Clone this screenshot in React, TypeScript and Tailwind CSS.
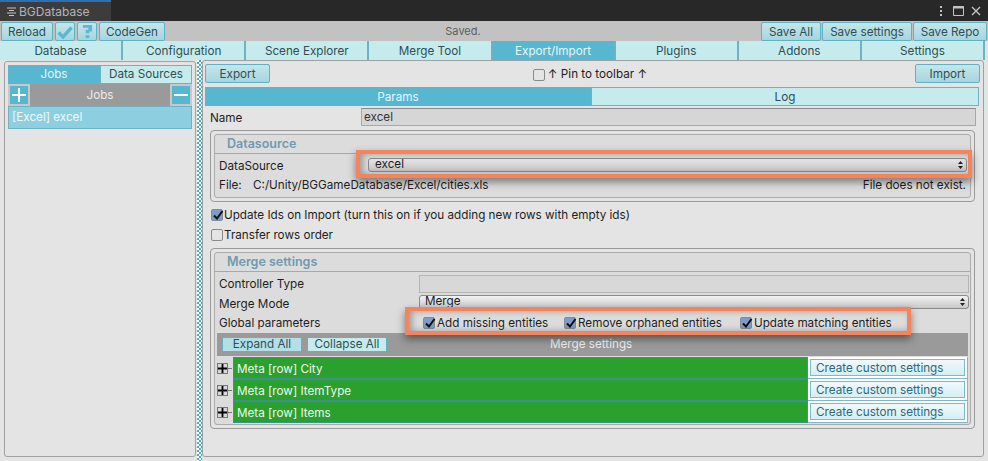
import React from "react";

const mainTabs = ["Database", "Configuration", "Scene Explorer", "Merge Tool", "Export/Import", "Plugins", "Addons", "Settings"];
const metas = ["Meta [row] City", "Meta [row] ItemType", "Meta [row] Items"];
const globals = [
  { label: "Add missing entities", w: "w-[141px]" },
  { label: "Remove orphaned entities", w: "w-[176px]" },
  { label: "Update matching entities", w: "w-[170px]" },
];

const btn =
  "h-[19px] pt-[2px] flex items-center justify-center border border-[#5fb2c4] rounded-[2px] bg-gradient-to-b from-[#c4e6ea] to-[#a6d5de] text-[#2f4f55]";

const Check = ({ on, blue }: { on?: boolean; blue?: boolean }) => (
  <span
    className={`relative w-[12px] h-[12px] shrink-0 rounded-[2px] border border-[#8a8a8a] ${
      blue ? "bg-[#7d9cc8]" : "bg-[#e4e4e4]"
    }`}
  >
    {on && (
      <svg viewBox="0 0 12 12" className="absolute left-[0px] top-[-1px] w-[12px] h-[12px]">
        <path d="M2 6.5 L5 9.5 L10.5 2" fill="none" stroke="#111" strokeWidth="2" />
      </svg>
    )}
  </span>
);

const Expander = () => (
  <span className="flex items-center">
    <span className="w-[11px] h-[11px] border border-[#777] bg-[#d8d8d8] flex items-center justify-center">
      <svg viewBox="0 0 9 9" className="w-[9px] h-[9px]">
        <path d="M0 4.5 H9 M4.5 0 V9" stroke="#000" strokeWidth="1.8" />
      </svg>
    </span>
    <span className="w-[4px] h-[1px] bg-[#777]" />
  </span>
);

const SelectArrows = () => (
  <svg viewBox="0 0 5 8" className="w-[5px] h-[8px]">
    <path d="M2.5 0 L5 3 H0 Z M2.5 8 L5 5 H0 Z" fill="#222" />
  </svg>
);

const GroupHeader = ({ title }: { title: string }) => (
  <div className="h-[19px] flex items-center pl-[12px] pt-[1px] border-b border-[#a8a8a8] text-[#6f9ab2] font-semibold text-[12.5px]">
    {title}
  </div>
);

const App = () => {
  return (
    <div
      className="relative w-[988px] h-[461px] overflow-hidden bg-[#e4e4e4] text-[11.7px] text-[#1e1e1e]"
      style={{ fontFamily: "Inter, 'Noto Sans', sans-serif" }}
    >
      {/* title bar */}
      <div className="h-[21px] bg-[#282828] flex justify-between">
        <div className="w-[111px] h-[21px] bg-[#3c3c3c] border-t-2 border-[#2f6fb0] flex items-center pl-[6px] gap-[2px] text-[#b4b4b4] text-[12px]">
          <svg viewBox="0 0 11 11" className="w-[11px] h-[11px]">
            <path d="M1 2 H10 M3 4.5 H8 M1 7 H10 M3 9.5 H8" stroke="#c4c4c4" strokeWidth="1" />
          </svg>
          BGDatabase
        </div>
        <div className="flex items-center gap-[7px] pr-[7px]">
          <svg viewBox="0 0 4 12" className="w-[4px] h-[12px] mr-[3px]">
            <path d="M1 1 H3 V3 H1 Z M1 5 H3 V7 H1 Z M1 9 H3 V11 H1 Z" fill="#c4c4c4" />
          </svg>
          <svg viewBox="0 0 11 10" className="w-[11px] h-[10px]">
            <path d="M.5 .5 H10.5 V9.5 H.5 Z" fill="none" stroke="#c4c4c4" />
            <path d="M0 1.5 H11" stroke="#c4c4c4" strokeWidth="2" />
          </svg>
          <svg viewBox="0 0 10 10" className="w-[10px] h-[10px]">
            <path d="M1 1 L9 9 M9 1 L1 9" stroke="#c4c4c4" strokeWidth="1.4" />
          </svg>
        </div>
      </div>

      {/* toolbar */}
      <div className="relative h-[20px] bg-[#c2c2c2] pt-[1px] pl-[1px] pr-[1px] flex gap-[1px]">
        <div className={`${btn} w-[52px]`}>Reload</div>
        <div className={`${btn} !pt-0 w-[20px] ml-[1px]`}>
          <svg viewBox="0 0 16 14" className="w-[16px] h-[14px]">
            <path d="M1.5 7.5 L6 12 L14.5 2.5" fill="none" stroke="#5cb8d2" strokeWidth="3.4" />
          </svg>
        </div>
        <div className={`${btn} !pt-0 w-[20px] ml-[1px]`}>
          <svg viewBox="0 0 12 16" className="w-[11px] h-[15px]">
            <path d="M1 1 H11 V8 H8 V10 H4 V6 H7 V4 H1 Z M4 12 H8 V15 H4 Z" fill="#5cb8d2" />
          </svg>
        </div>
        <div className={`${btn} w-[66px] ml-[1px]`}>CodeGen</div>
        <div className="flex-1 flex items-center justify-center text-[#5e5e5e] text-[11px]">Saved.</div>
        <div className={`${btn} w-[60px]`}>Save All</div>
        <div className={`${btn} w-[90px]`}>Save settings</div>
        <div className={`${btn} w-[74px]`}>Save Repo</div>
      </div>

      {/* main tabs */}
      <div className="h-[19px] bg-[#c2c2c2] flex w-[985px]">
        {mainTabs.map((t) => (
          <div
            key={t}
            className={`flex-1 pt-[2px] flex items-center justify-center border-r-2 border-[#6fb2c0] ${
              t === "Export/Import" ? "bg-[#57b6d0] text-[#e8f6fa]" : "bg-[#c5ebec] text-[#2f4f55]"
            }`}
          >
            {t}
          </div>
        ))}
      </div>

      <div className="flex h-[401px]">
        {/* left pane */}
        <div className="w-[197px] pl-[4px] pr-[1px] pt-[1px]">
          <div className="h-[396px] border border-[#a0a0a0] rounded-[3px] px-[3px] pt-[3px]">
            <div className="flex h-[19px]">
              <div className="w-[92px] pt-[1px] bg-[#57b6d0] text-[#e8f6fa] flex items-center justify-center">Jobs</div>
              <div className="w-[92px] pt-[1px] bg-[#c5ebec] border border-[#6fb2c0] text-[#2f4f55] flex items-center justify-center">
                Data Sources
              </div>
            </div>
            <div className="h-[22px] bg-[#9a9a9a] flex items-center w-[184px]">
              <div className="w-[22px] h-[22px] border-2 border-[#c8c8c8] bg-[#57b6d0] flex items-center justify-center">
                <svg viewBox="0 0 14 14" className="w-[14px] h-[14px]">
                  <path d="M0 7 H14 M7 0 V14" stroke="#fff" strokeWidth="2" />
                </svg>
              </div>
              <div className="flex-1 pt-[1px] text-center text-[#ececec]">Jobs</div>
              <div className="w-[22px] h-[22px] border-2 border-[#c8c8c8] bg-[#57b6d0] flex items-center justify-center">
                <svg viewBox="0 0 14 14" className="w-[14px] h-[14px]">
                  <path d="M0 7 H14" stroke="#fff" strokeWidth="2" />
                </svg>
              </div>
            </div>
            <div className="h-[23px] w-[184px] bg-[#8dcfe0] border border-[#6fb2c0] flex items-center pl-[3px] text-[#f2f8fa]">
              [Excel] excel
            </div>
          </div>
        </div>

        {/* splitter */}
        <div className="w-[5px] h-full bg-[repeating-conic-gradient(#3fb0c8_0%_25%,#ffffff_0%_50%)] bg-[length:4px_4px]" />

        {/* right pane */}
        <div className="w-[782px] h-[397px] border border-[#a0a0a0] rounded-[3px] px-[2px] pt-[3px]">
          <div className="flex h-[19px] justify-between items-center relative pr-[1px]">
            <div className={`${btn} w-[65px]`}>Export</div>
            <div className="flex items-center gap-[3px] pr-[5px] pt-[2px]">
              <Check />
              <span>↑ Pin to toolbar ↑</span>
            </div>
            <div className={`${btn} w-[65px]`}>Import</div>
          </div>

          <div className="flex mt-[4px] h-[19px] w-[774px]">
            <div className="flex-1 pt-[2px] bg-[#57b6d0] text-[#e8f6fa] flex items-center justify-center">Params</div>
            <div className="flex-1 pt-[2px] bg-[#c5ebec] border border-[#6fb2c0] text-[#2f4f55] flex items-center justify-center">
              Log
            </div>
          </div>

          <div className="flex items-center h-[18px] mt-[2px] pl-[5px]">
            <span className="w-[151px] pt-[4px]">Name</span>
            <div className="w-[615px] h-[18px] pt-[1px] border border-[#a8a8a8] border-t-[#8a8a8a] bg-[#d6d6d6] flex items-center pl-[2px] text-[#333]">
              excel
            </div>
          </div>

          {/* datasource group */}
          <div className="ml-[5px] w-[765px] h-[72px] mt-[4px] border border-[#9a9a9a] rounded-[4px] p-[3px]">
            <div className="h-[64px] border border-[#ababab] rounded-[3px] bg-[#dcdcdc]">
              <GroupHeader title="Datasource" />
              <div className="flex items-center h-[22px] pl-[4px]">
                <span className="w-[150px] pt-[4px]">DataSource</span>
                <div className="w-[599px] h-[14px] ml-[-1px] border border-[#8a8a8a] rounded-[3px] bg-gradient-to-b from-[#e6e6e6] to-[#c4c4c4] flex items-center justify-between pl-[6px] pr-[3px]">
                  <span>excel</span>
                  <SelectArrows />
                </div>
              </div>
              <div className="flex justify-between h-[16px] items-center pl-[4px] pr-[4px] pt-[4px]">
                <span>
                  <span className="inline-block w-[34px]">File:</span>C:/Unity/BGGameDatabase/Excel/cities.xls
                </span>
                <span>File does not exist.</span>
              </div>
            </div>
          </div>

          <div className="flex items-center gap-[1px] ml-[6px] mt-[5px] h-[15px]">
            <Check on blue />
            <span className="pt-[2px]">Update Ids on Import (turn this on if you adding new rows with empty ids)</span>
          </div>
          <div className="flex items-center gap-[1px] ml-[6px] mt-[5px] h-[15px]">
            <Check />
            <span className="pt-[2px]">Transfer rows order</span>
          </div>

          {/* merge group */}
          <div className="ml-[5px] w-[765px] h-[181px] mt-[6px] border border-[#9a9a9a] rounded-[4px] p-[3px]">
            <div className="h-[173px] border border-[#ababab] rounded-[3px] bg-[#dcdcdc]">
              <GroupHeader title="Merge settings" />
              <div className="flex items-center h-[19px] pl-[4px] mt-[2px]">
                <span className="w-[200px] pt-[2px]">Controller Type</span>
                <div className="w-[550px] h-[18px] border border-[#b4b4b4] bg-[#d8d8d8]" />
              </div>
              <div className="flex items-start h-[20px] pl-[4px] mt-[1px]">
                <span className="w-[200px] leading-[20px]">Merge Mode</span>
                <div className="w-[550px] h-[14px] mt-[1px] border border-[#8a8a8a] rounded-[3px] bg-gradient-to-b from-[#f2f2f2] to-[#c8c8c8] flex items-center justify-between pl-[5px] pr-[3px]">
                  <span>Merge</span>
                  <SelectArrows />
                </div>
              </div>
              <div className="flex items-center h-[19px] pl-[4px]">
                <span className="w-[204px]">Global parameters</span>
                {globals.map((g) => (
                  <div key={g.label} className={`flex items-center gap-[2px] ${g.w}`}>
                    <Check on blue />
                    <span>{g.label}</span>
                  </div>
                ))}
              </div>
              <div className="ml-[2px] w-[751px] h-[23px] bg-[#9a9a9a] flex items-center relative pl-[5px] gap-[5px]">
                <div className="w-[80px] h-[15px] border border-[#5fb2c4] bg-[#b4dfe6] text-[#2f4f55] flex items-center justify-center">
                  Expand All
                </div>
                <div className="w-[80px] h-[15px] border border-[#5fb2c4] bg-[#c5ebec] text-[#2f4f55] flex items-center justify-center">
                  Collapse All
                </div>
                <span className="ml-[158px] text-[#f0f0f0]">Merge settings</span>
              </div>
              <div className="mt-[1px]">
                {metas.map((m) => (
                  <div key={m} className="ml-[2px] w-[751px] h-[22px] flex items-center">
                    <div className="w-[16px] flex items-center">
                      <Expander />
                    </div>
                    <div className="w-[575px] h-[22px] bg-[#2aa02e] border border-[#3f9090] text-[#eef8ee] flex items-center pl-[3px] pt-[3px]">
                      {m}
                    </div>
                    <div className="w-[160px] h-[22px] bg-white border-b border-r border-[#7fb8c8] px-[2px] py-[2px]">
                      <div className="h-full pt-[3px] border border-[#7fb8c8] bg-gradient-to-b from-[#f0f9fb] to-[#d6eef4] text-[#2a6a7a] pl-[5px] flex items-center">
                        Create custom settings
                      </div>
                    </div>
                  </div>
                ))}
              </div>
            </div>
          </div>
        </div>
      </div>

      {/* orange callouts */}
      <div className="absolute left-[356px] top-[150px] w-[616px] h-[28px] border-4 border-[#f5845c] shadow-[0_4px_8px_rgba(0,0,0,0.45),inset_3px_0_6px_rgba(0,0,0,0.3)]" />
      <div className="absolute left-[405px] top-[307px] w-[506px] h-[28px] border-4 border-[#f5845c] shadow-[0_4px_8px_rgba(0,0,0,0.45),inset_3px_0_6px_rgba(0,0,0,0.3)]" />
    </div>
  );
};

export default App;
